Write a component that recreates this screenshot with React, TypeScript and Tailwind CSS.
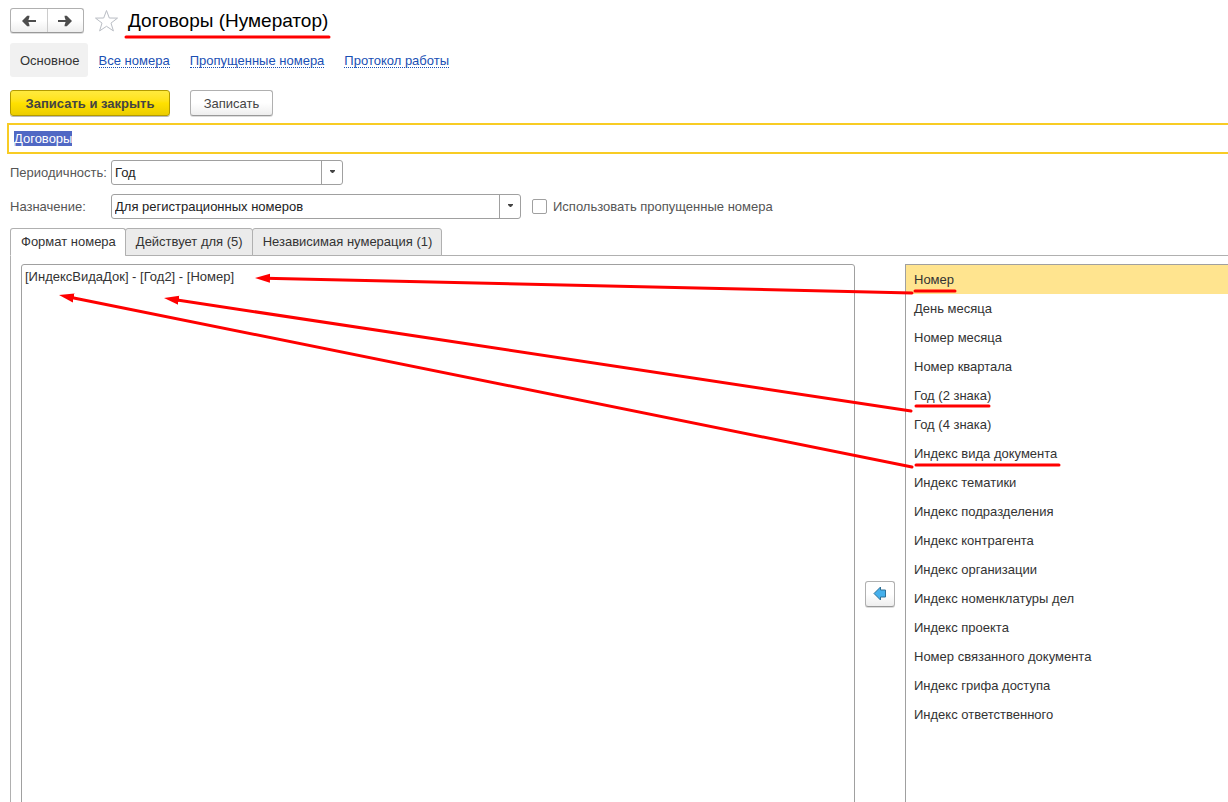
import { useEffect, useRef, useState } from "react";

const links = ["Все номера", "Пропущенные номера", "Протокол работы"];

const tabs = ["Формат номера", "Действует для (5)", "Независимая нумерация (1)"];

const fields = [
    "Номер",
    "День месяца",
    "Номер месяца",
    "Номер квартала",
    "Год (2 знака)",
    "Год (4 знака)",
    "Индекс вида документа",
    "Индекс тематики",
    "Индекс подразделения",
    "Индекс контрагента",
    "Индекс организации",
    "Индекс номенклатуры дел",
    "Индекс проекта",
    "Номер связанного документа",
    "Индекс грифа доступа",
    "Индекс ответственного",
];

// x1, y1 is the tail, x2, y2 is the tip
const arrows = [
    { x1: 912, y1: 293, x2: 255, y2: 278 },
    { x1: 911, y1: 411, x2: 164, y2: 298 },
    { x1: 912, y1: 467, x2: 59, y2: 295 },
];

const underlines = [
    { x1: 126, x2: 329, y: 37 },
    { x1: 915, x2: 955, y: 291 },
    { x1: 916, x2: 989, y: 406 },
    { x1: 916, x2: 1059, y: 465 },
];

type DropdownProps = {
    id: string;
    value: string;
    className: string;
};

const Dropdown = ({ id, value, className }: DropdownProps) => (
    <div className={`relative h-[25px] ${className}`}>
        <select
            id={id}
            className="block h-full w-full appearance-none rounded-[3px] border border-[#a0a0a0] bg-white pl-[3px] pr-6 text-[#222] outline-none"
        >
            <option>{value}</option>
        </select>
        <span className="pointer-events-none absolute inset-y-0 right-0 flex w-[22px] items-center justify-center border-l border-[#a0a0a0]">
            <svg width="6" height="5" viewBox="0 0 6 5" fill="#444">
                <path d="M0 0h5v1L3 3H2L0 1z" />
            </svg>
        </span>
    </div>
);

const NavArrow = ({ flip }: { flip?: boolean }) => (
    <svg
        width="14"
        height="12"
        viewBox="0 0 14 12"
        fill="#4d4d4d"
        className={flip ? "-scale-x-100" : ""}
    >
        <path d="M0 6 5.2 .8H7.4V2L6.4 5H14V7H6.4L7.4 10v1.2H5.2z" />
    </svg>
);

const Annotations = () => (
    <svg
        aria-hidden="true"
        width="1228"
        height="802"
        className="pointer-events-none absolute left-0 top-0"
        stroke="#f00"
        strokeWidth="3"
        strokeLinecap="round"
    >
        <defs>
            <marker
                id="head"
                markerUnits="userSpaceOnUse"
                markerWidth="16"
                markerHeight="10"
                refX="15"
                refY="5"
                orient="auto"
            >
                <path d="M0 .5 15 5 0 9.5z" fill="#f00" stroke="none" />
            </marker>
        </defs>
        {arrows.map(({ x1, y1, x2, y2 }) => {
            // the shaft stops inside the head so that the tip stays sharp
            const len = Math.hypot(x2 - x1, y2 - y1);
            const k = (len - 10) / len;
            return (
                <g key={y1}>
                    <line x1={x1} y1={y1} x2={x1 + (x2 - x1) * k} y2={y1 + (y2 - y1) * k} />
                    <line x1={x1} y1={y1} x2={x2} y2={y2} stroke="none" markerEnd="url(#head)" />
                </g>
            );
        })}
        {underlines.map(({ x1, x2, y }) => (
            <line key={y} x1={x1} y1={y} x2={x2} y2={y} />
        ))}
    </svg>
);

const App = () => {
    const nameRef = useRef<HTMLInputElement>(null);
    const [selected, setSelected] = useState(0);
    const [format, setFormat] = useState("[ИндексВидаДок] - [Год2] - [Номер]");

    useEffect(() => {
        nameRef.current?.focus();
        nameRef.current?.select();
    }, []);

    return (
        <div className="relative h-screen overflow-hidden bg-white pt-2 font-['Liberation_Sans',Arial,sans-serif] text-[13px] leading-4 text-[#333]">
            {/* Title bar */}
            <header className="flex h-[25px] items-center pl-2.5">
                <div className="flex h-[25px] w-[74px] rounded-[3px] border border-[#b0b0b0] border-b-[#999] bg-gradient-to-b from-white from-50% to-[#eee] shadow-[0_1px_0_#ddd]">
                    <button aria-label="Назад" className="flex flex-1 items-center justify-center border-r border-[#ccc]">
                        <NavArrow />
                    </button>
                    <button aria-label="Вперед" className="flex flex-1 items-center justify-center">
                        <NavArrow flip />
                    </button>
                </div>
                <button aria-label="В избранное" className="ml-2.5">
                    <svg width="25" height="24" viewBox="0 0 25 24" fill="#fff" stroke="#b9bdc4">
                        <path d="M12.5 1.5 15.3 9 23.5 9.1 17 14.1 19.4 21.9 12.5 17.3 5.6 21.9 8 14.1 1.5 9.1 9.7 9z" />
                    </svg>
                </button>
                <h1 className="ml-[9px] text-[19px] leading-6 text-black">Договоры (Нумератор)</h1>
            </header>

            {/* Section links */}
            <nav className="mt-2.5 flex h-[34px] items-center pl-2.5">
                <span className="flex h-full items-center rounded-[3px] bg-[#f1f1f1] pl-2.5 pr-2 pt-0.5">
                    Основное
                </span>
                <div className="ml-[11px] flex gap-5 pt-0.5">
                    {links.map((link) => (
                        <a key={link} href="#" className="border-b border-dotted border-[#1a4fb4] leading-3 text-[#1a4fb4]">
                            {link}
                        </a>
                    ))}
                </div>
            </nav>

            {/* Commands */}
            <div className="mt-[13px] flex gap-5 pl-2.5">
                <button className="h-[26px] w-40 rounded-[3px] border border-[#b39b00] bg-gradient-to-b from-[#ffea3d] via-[#ffe100] to-[#eccd00] pt-0.5 font-bold text-[#444] shadow-[0_1px_0_#bbb]">
                    Записать и закрыть
                </button>
                <button className="h-[26px] w-[83px] rounded-[3px] border border-[#b0b0b0] border-b-[#999] bg-gradient-to-b from-white from-50% to-[#eee] pt-0.5 text-[#444] shadow-[0_1px_0_#ddd]">
                    Записать
                </button>
            </div>

            <div className="mt-[7px] pl-[7px]">
                <input
                    ref={nameRef}
                    aria-label="Наименование"
                    defaultValue="Договоры"
                    className="block h-[31px] w-full border-2 border-r-0 border-[#f8cc24] bg-white px-[5px] outline-none selection:bg-[#5068c4] selection:text-white"
                />
            </div>

            <div className="mt-1.5 flex items-center pl-2.5">
                <label htmlFor="period" className="w-[101px] text-[#555]">
                    Периодичность:
                </label>
                <Dropdown id="period" value="Год" className="w-[232px]" />
            </div>

            <div className="mt-[9px] flex items-center pl-2.5">
                <label htmlFor="purpose" className="w-[101px] text-[#555]">
                    Назначение:
                </label>
                <Dropdown id="purpose" value="Для регистрационных номеров" className="w-[410px]" />
                <label className="ml-[11px] flex items-center gap-1.5 text-[#555]">
                    <input
                        type="checkbox"
                        className="size-[15px] appearance-none rounded-[2px] border border-[#a0a0a0] bg-white checked:bg-[#f8cc24]"
                    />
                    Использовать пропущенные номера
                </label>
            </div>

            {/* Tabs */}
            <div role="tablist" className="relative z-10 mt-[9px] flex pl-2.5">
                {tabs.map((tab, i) => (
                    <button
                        key={tab}
                        role="tab"
                        aria-selected={i === 0}
                        className={`-mr-px h-7 rounded-t-[3px] border border-[#b0b0b0] pl-2.5 pr-[9px] ${
                            i === 0 ? "border-b-white bg-white" : "bg-[#ebebeb]"
                        }`}
                    >
                        {tab}
                    </button>
                ))}
            </div>

            <div className="-mt-px ml-2.5 border-l border-t border-[#b0b0b0] pl-2.5 pt-2">
                <div className="flex h-[660px] gap-2.5">
                    <textarea
                        aria-label="Формат номера"
                        value={format}
                        onChange={(e) => setFormat(e.target.value)}
                        className="min-w-0 flex-1 resize-none rounded-[3px] border border-[#a0a0a0] px-[3px] py-1 outline-none"
                    />
                    <button
                        aria-label="Добавить в формат"
                        className="flex h-[26px] w-[30px] shrink-0 items-center justify-center self-center rounded-[3px] border border-[#b0b0b0] border-b-[#999] bg-gradient-to-b from-white from-50% to-[#eee] shadow-[0_1px_0_#ddd]"
                    >
                        <svg width="14" height="16" viewBox="0 0 14 16" fill="#45b0ec" stroke="#2f7097">
                            <path d="M1 7.5 7.5 1v3h5v7h-5v3z" />
                        </svg>
                    </button>
                    <ul className="w-[323px] border-l border-t border-[#a0a0a0]">
                        {fields.map((field, i) => (
                            <li key={field}>
                                <button
                                    onClick={() => setSelected(i)}
                                    className={`block h-[29px] w-full px-2 text-left ${
                                        i === selected ? "bg-[#ffe48f]" : ""
                                    }`}
                                >
                                    {field}
                                </button>
                            </li>
                        ))}
                    </ul>
                </div>
            </div>

            <Annotations />
        </div>
    );
};

export default App;
